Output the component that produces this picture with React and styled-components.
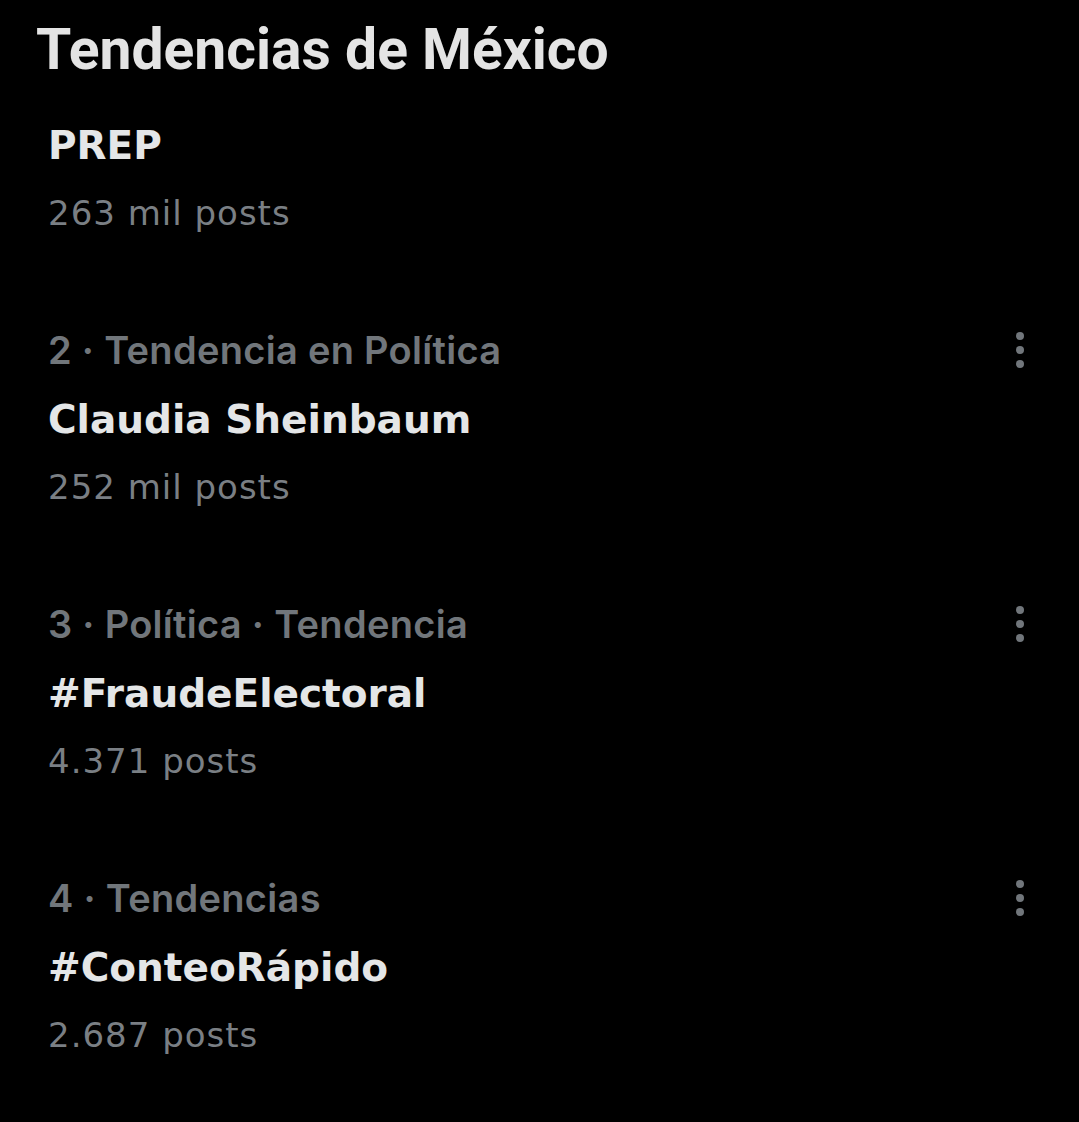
import React from "react";
import styled, { createGlobalStyle } from "styled-components";

const Global = createGlobalStyle`
  html, body {
    margin: 0;
    padding: 0;
    background: #000;
  }
  body {
    min-height: 1122px;
    -webkit-font-smoothing: antialiased;
  }
`;

const Page = styled.main`
  background: #000;
  min-height: 1122px;
  padding: 20px 47px 0 36px;
  box-sizing: border-box;
`;

const Title = styled.h1`
  margin: 0 0 31px;
  font-family: Roboto, "Liberation Sans", sans-serif;
  font-weight: 700;
  font-size: 57px;
  line-height: 60px;
  color: #e4e4e4;
`;

const List = styled.ul`
  list-style: none;
  margin: 0;
  padding: 0 0 0 12px;
  display: flex;
  flex-direction: column;
  gap: 70px;
`;

const Item = styled.li`
  display: flex;
  flex-direction: column;
`;

const MetaRow = styled.div`
  display: flex;
  align-items: center;
  justify-content: space-between;
  height: 70px;
`;

const Meta = styled.span`
  font-family: Inter, "Noto Sans", sans-serif;
  font-weight: 600;
  font-size: 38px;
  line-height: 70px;
  letter-spacing: 0.3px;
  color: #71767b;
`;

const Name = styled.div`
  font-family: "DejaVu Sans", Inter, sans-serif;
  font-weight: 700;
  font-size: 39px;
  line-height: 70px;
  height: 70px;
  color: #e4e6e7;
`;

const Count = styled.div`
  font-family: "DejaVu Sans", Inter, sans-serif;
  font-weight: 400;
  font-size: 34px;
  line-height: 64px;
  height: 64px;
  letter-spacing: 1px;
  color: #7a7f84;
`;

const MoreButton = styled.button`
  background: none;
  border: 0;
  padding: 0;
  width: 24px;
  height: 40px;
  display: flex;
  align-items: center;
  justify-content: center;
  cursor: pointer;
`;

const MoreIcon = () => (
  <svg width="24" height="40" viewBox="0 0 24 40" aria-hidden="true">
    <circle cx="12" cy="6" r="4" fill="#71767b" />
    <circle cx="12" cy="20" r="4" fill="#71767b" />
    <circle cx="12" cy="34" r="4" fill="#71767b" />
  </svg>
);

const trends = [
  { meta: null, name: "PREP", count: "263 mil posts" },
  { meta: "2 · Tendencia en Política", name: "Claudia Sheinbaum", count: "252 mil posts" },
  { meta: "3 · Política · Tendencia", name: "#FraudeElectoral", count: "4.371 posts" },
  { meta: "4 · Tendencias", name: "#ConteoRápido", count: "2.687 posts" },
];

export default function App() {
  return (
    <>
      <Global />
      <Page>
        <Title>Tendencias de México</Title>
        <List>
          {trends.map((t) => (
            <Item key={t.name}>
              {t.meta && (
                <MetaRow>
                  <Meta>{t.meta}</Meta>
                  <MoreButton aria-label="Más opciones">
                    <MoreIcon />
                  </MoreButton>
                </MetaRow>
              )}
              <Name>{t.name}</Name>
              <Count>{t.count}</Count>
            </Item>
          ))}
        </List>
      </Page>
    </>
  );
}
